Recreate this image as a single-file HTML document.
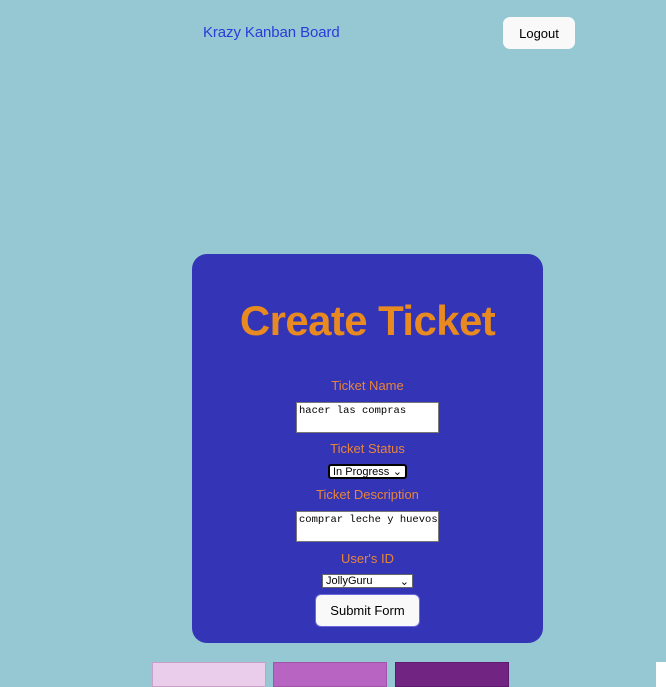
<!DOCTYPE html>
<html><head><style>
*{box-sizing:border-box}
body{margin:0;width:666px;height:687px;background:#96c8d4;font-family:"Liberation Sans",sans-serif;position:relative;overflow:hidden}
.abs{position:absolute}
.brand{left:203px;top:24px;color:#2a3bd8;font-size:15px;letter-spacing:-0.1px}
.logout{left:503px;top:17px;width:72px;height:32px;background:#f9f9f9;border-radius:7px;font-size:13px;display:flex;align-items:center;justify-content:center;color:#000}
.card{left:192px;top:254px;width:351px;height:389px;background:#3434b6;border-radius:15px}
.h{left:192px;width:351px;text-align:center;color:#e88a1f;font-weight:bold;font-size:42px;top:297px;letter-spacing:-0.6px}
.lbl{left:192px;width:351px;text-align:center;color:#e8843a;font-size:13px}
.ta{left:296px;width:143px;height:31px;background:#fff;border:1px solid #777;font-family:"Liberation Mono",monospace;font-size:10.5px;padding:2px 2px;color:#000;white-space:nowrap;overflow:hidden}
.sel{background:#fff;color:#000;font-size:11px;padding:0 3px;display:flex;align-items:center;justify-content:space-between}
.sw{top:662px;height:25px}
</style></head><body>
<div class="abs brand">Krazy Kanban Board</div>
<div class="abs logout">Logout</div>
<div class="abs card"></div>
<div class="abs h">Create Ticket</div>
<div class="abs lbl" style="top:378px">Ticket Name</div>
<div class="abs ta" style="top:402px">hacer las compras</div>
<div class="abs lbl" style="top:441px">Ticket Status</div>
<div class="abs sel" style="left:328px;top:464px;width:79px;height:15px;border:2px solid #000;border-radius:3px">In Progress <span>⌄</span></div>
<div class="abs lbl" style="top:487px">Ticket Description</div>
<div class="abs ta" style="top:511px">comprar leche y huevos</div>
<div class="abs lbl" style="top:551px">User's ID</div>
<div class="abs sel" style="left:322px;top:574px;width:91px;height:14px;border:1px solid #666">JollyGuru <span>⌄</span></div>
<div class="abs" style="left:315px;top:594px;width:105px;height:33px;background:#f9f9f9;border:1px solid #6a6ad8;border-radius:6px;font-size:13px;display:flex;align-items:center;justify-content:center">Submit Form</div>
<div class="abs sw" style="left:152px;width:114px;background:#e9cdea;border:1px solid #c9a0c8"></div>
<div class="abs sw" style="left:273px;width:114px;background:#b764c3;border:1px solid #a055a8"></div>
<div class="abs sw" style="left:395px;width:114px;background:#722483;border:1px solid #5e1a6e"></div>
<div class="abs sw" style="left:656px;width:10px;background:#fff"></div>
</body></html>
